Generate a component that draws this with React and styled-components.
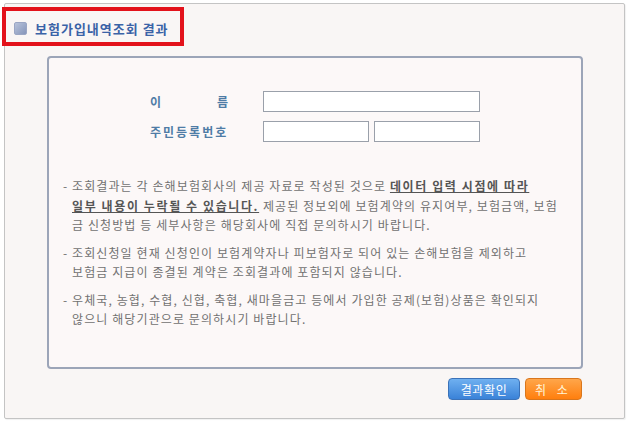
import React from 'react';
import styled, { createGlobalStyle } from 'styled-components';

const GlobalStyle = createGlobalStyle`
  html, body {
    margin: 0;
    padding: 0;
    background: #ffffff;
  }
  body {
    font-family: "Noto Sans CJK KR", "Noto Sans", sans-serif;
  }
`;

const Page = styled.div`
  width: 629px;
  height: 423px;
  box-sizing: border-box;
  padding: 3px 4px 4px 4px;
  position: relative;
`;

const Panel = styled.div`
  height: 100%;
  box-sizing: border-box;
  border: 1px solid #c4c4c4;
  border-radius: 2px;
  background: #f9f6f5;
  box-shadow: 1px 1px 1px rgba(0, 0, 0, 0.06);
  display: flex;
  flex-direction: column;
`;

const TitleBar = styled.div`
  height: 47px;
  display: flex;
  align-items: center;
  gap: 8px;
  padding-left: 9px;
  padding-top: 2px;
  box-sizing: border-box;
`;

const Highlight = styled.div`
  position: absolute;
  left: 2px;
  top: 7px;
  width: 182px;
  height: 39px;
  box-sizing: border-box;
  border: 4px solid #e3121b;
  pointer-events: none;
`;

const TitleIcon = styled.span`
  width: 13px;
  height: 13px;
  border-radius: 2px;
  background: linear-gradient(135deg, #b8c3db 0%, #8595ba 100%);
  border: 1px solid #9aa6c4;
  box-sizing: border-box;
`;

const Title = styled.h1`
  margin: 0;
  font-size: 13px;
  font-weight: bold;
  color: #3a63a7;
  letter-spacing: 1px;
`;

const InnerBox = styled.div`
  margin: 5px 0 0 42px;
  width: 536px;
  height: 313px;
  box-sizing: border-box;
  border: 2px solid #9ca5b8;
  border-radius: 4px;
  background: #fcf8f8;
  padding: 33px 0 0 101px;
`;

const FormGrid = styled.div`
  display: grid;
  grid-template-columns: 78px 217px;
  column-gap: 35px;
  row-gap: 9px;
  align-items: center;
`;

const Label = styled.div`
  display: flex;
  justify-content: ${({ $spread }) => ($spread ? 'space-between' : 'flex-start')};
  font-size: 12px;
  font-weight: bold;
  color: #4f7ca6;
  letter-spacing: ${({ $spread }) => ($spread ? '0' : '2px')};
  white-space: nowrap;
`;

const InputRow = styled.div`
  display: flex;
  gap: 5px;
`;

const TextInput = styled.input`
  width: ${({ $w }) => $w}px;
  height: 21px;
  box-sizing: border-box;
  border: 1px solid #9aa0aa;
  background: #ffffff;
  margin: 0;
  padding: 0 3px;
  outline: none;
`;

const Notes = styled.div`
  margin: 34px 0 0 -87px;
  width: 520px;
  font-size: 12px;
  line-height: 19.5px;
  color: #717171;
`;

const Note = styled.p`
  margin: 0 0 8px 0;
  padding-left: 9px;
  text-indent: -9px;
  white-space: nowrap;
  letter-spacing: 1.1px;
`;

const Strong = styled.span`
  font-weight: bold;
  color: #555555;
  text-decoration: underline;
  letter-spacing: 1.6px;
`;

const ButtonRow = styled.div`
  display: flex;
  justify-content: flex-end;
  gap: 5px;
  margin: 9px 42px 0 0;
`;

const Button = styled.button`
  height: 22px;
  width: ${({ $w }) => $w}px;
  border-radius: 4px;
  font-family: inherit;
  font-size: 12px;
  padding: 0;
  cursor: pointer;
  border: 1px solid ${({ $tone }) => ($tone === 'orange' ? '#d9761c' : '#3b72b8')};
  color: ${({ $tone }) => ($tone === 'orange' ? '#fff4d6' : '#ffffff')};
  background: ${({ $tone }) =>
    $tone === 'orange'
      ? 'linear-gradient(#ffa64a, #ff7f0e)'
      : 'linear-gradient(#6fb0f0, #3a82d8)'};
  letter-spacing: ${({ $tone }) => ($tone === 'orange' ? '4px' : '0.6px')};
`;

export default function App() {
  return (
    <>
      <GlobalStyle />
      <Page>
        <Panel>
          <TitleBar>
            <TitleIcon />
            <Title>보험가입내역조회 결과</Title>
          </TitleBar>
          <InnerBox>
            <FormGrid>
              <Label $spread>
                <span>이</span>
                <span>름</span>
              </Label>
              <TextInput $w={217} />
              <Label>주민등록번호</Label>
              <InputRow>
                <TextInput $w={106} />
                <TextInput $w={106} />
              </InputRow>
            </FormGrid>
            <Notes>
              <Note>
                - 조회결과는 각 손해보험회사의 제공 자료로 작성된 것으로 <Strong>데이터 입력 시점에 따라</Strong>
                <br />
                <Strong>일부 내용이 누락될 수 있습니다.</Strong> 제공된 정보외에 보험계약의 유지여부, 보험금액, 보험
                <br />
                금 신청방법 등 세부사항은 해당회사에 직접 문의하시기 바랍니다.
              </Note>
              <Note>
                - 조회신청일 현재 신청인이 보험계약자나 피보험자로 되어 있는 손해보험을 제외하고
                <br />
                보험금 지급이 종결된 계약은 조회결과에 포함되지 않습니다.
              </Note>
              <Note>
                - 우체국, 농협, 수협, 신협, 축협, 새마을금고 등에서 가입한 공제(보험)상품은 확인되지
                <br />
                않으니 해당기관으로 문의하시기 바랍니다.
              </Note>
            </Notes>
          </InnerBox>
          <ButtonRow>
            <Button $w={72}>결과확인</Button>
            <Button $w={57} $tone="orange">취 소</Button>
          </ButtonRow>
        </Panel>
        <Highlight />
      </Page>
    </>
  );
}
